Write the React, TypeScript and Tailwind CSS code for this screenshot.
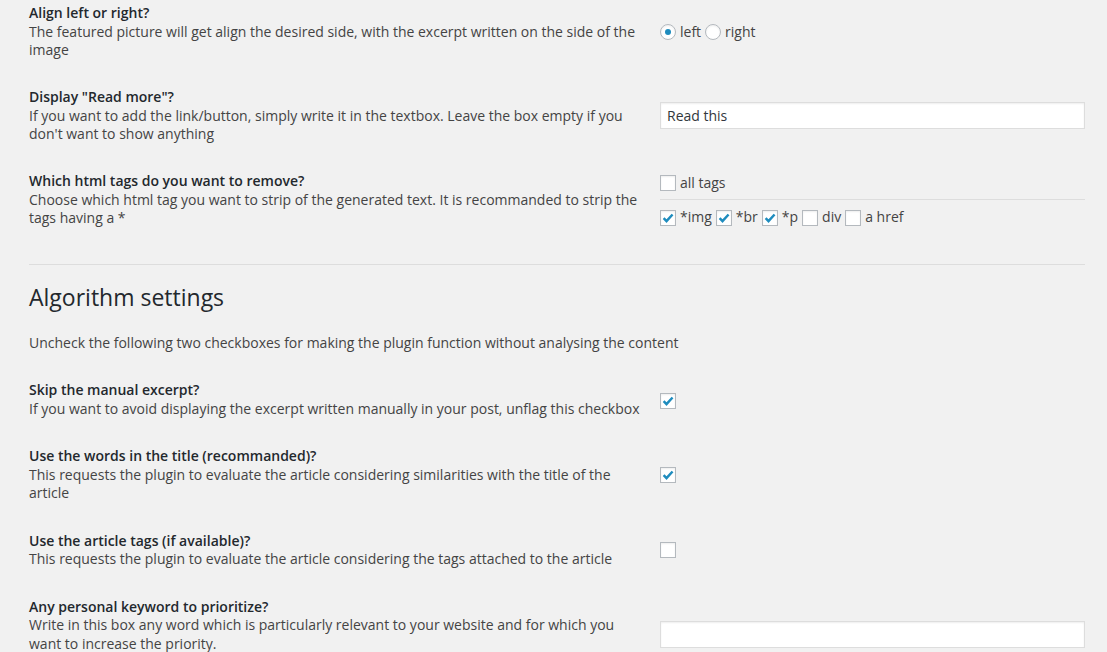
import React from 'react';

const Check = () => (
  <svg viewBox="0 0 16 16" className="w-[16px] h-[16px]">
    <path d="M3 8.2 L6.3 11.6 L13.2 4" fill="none" stroke="#1e8cbe" strokeWidth="2.8" strokeLinejoin="miter" />
  </svg>
);

const Checkbox: React.FC<{ checked?: boolean }> = ({ checked }) => (
  <span className="inline-flex w-[16px] h-[16px] shrink-0 items-center justify-center border border-[#b4b9be] bg-white shadow-[inset_0_1px_2px_rgba(0,0,0,0.07)]">
    {checked && <Check />}
  </span>
);

const Radio: React.FC<{ checked?: boolean }> = ({ checked }) => (
  <span className="inline-flex w-[16px] h-[16px] shrink-0 items-center justify-center rounded-full border border-[#b4b9be] bg-white shadow-[inset_0_1px_2px_rgba(0,0,0,0.07)]">
    {checked && <span className="w-[6px] h-[6px] rounded-full bg-[#1e8cbe]" />}
  </span>
);

const Row: React.FC<{ title: string; desc: string; children?: React.ReactNode; top?: boolean }> = ({ title, desc, children, top }) => (
  <div className={`grid grid-cols-[631px_1fr] ${top ? 'items-start' : 'items-center'}`}>
    <div className="pr-[16px]">
      <div className="font-semibold text-[#23282d]">{title}</div>
      <div>{desc}</div>
    </div>
    <div>{children}</div>
  </div>
);

const Input: React.FC<{ value?: string }> = ({ value }) => (
  <input
    readOnly
    value={value ?? ''}
    className="w-full h-[27px] border border-[#ddd] bg-white px-[6px] text-[14px] text-[#32373c] shadow-[inset_0_1px_2px_rgba(0,0,0,0.07)] outline-none"
  />
);

export default function App() {
  return (
    <div className="min-h-screen bg-[#f1f1f1] font-['Open_Sans',sans-serif] text-[14px] leading-[18.5px] text-[#444]">
      <div className="pl-[29px] pr-[22px] pt-[4px]">
        <div className="flex flex-col gap-[28.5px]">
          <Row
            title="Align left or right?"
            desc="The featured picture will get align the desired side, with the excerpt written on the side of the image"
          >
            <div className="flex items-center">
              <Radio checked />
              <span className="ml-[4px] mr-[4px]">left</span>
              <Radio />
              <span className="ml-[4px]">right</span>
            </div>
          </Row>
          <Row
            title={'Display "Read more"?'}
            desc="If you want to add the link/button, simply write it in the textbox. Leave the box empty if you don't want to show anything"
          >
            <Input value="Read this" />
          </Row>
          <Row
            title="Which html tags do you want to remove?"
            desc="Choose which html tag you want to strip of the generated text. It is recommanded to strip the tags having a *"
          >
            <div className="flex flex-col pt-[1px]">
              <div className="flex items-center">
                <Checkbox />
                <span className="ml-[4px]">all tags</span>
              </div>
              <div className="mt-[7px] mb-[8px] border-t border-[#ddd]" />
              <div className="flex items-center">
                <Checkbox checked />
                <span className="ml-[4px] mr-[4px]">*img</span>
                <Checkbox checked />
                <span className="ml-[4px] mr-[4px]">*br</span>
                <Checkbox checked />
                <span className="ml-[4px] mr-[4px]">*p</span>
                <Checkbox />
                <span className="ml-[4px] mr-[4px]">div</span>
                <Checkbox />
                <span className="ml-[4px]">a href</span>
              </div>
            </div>
          </Row>
        </div>

        <div className="mt-[36px] border-t border-[#ddd]" />

        <h2 className="mt-[18px] text-[23px] leading-[29px] font-normal text-[#23282d]">Algorithm settings</h2>
        <p className="mt-[22px]">Uncheck the following two checkboxes for making the plugin function without analysing the content</p>

        <div className="mt-[29px] flex flex-col gap-[29px]">
          <Row
            title="Skip the manual excerpt?"
            desc="If you want to avoid displaying the excerpt written manually in your post, unflag this checkbox"
          >
            <div className="pt-[7px]">
              <Checkbox checked />
            </div>
          </Row>
          <Row
            title="Use the words in the title (recommanded)?"
            desc="This requests the plugin to evaluate the article considering similarities with the title of the article"
          >
            <div className="pt-[4px]">
              <Checkbox checked />
            </div>
          </Row>
          <Row
            title="Use the article tags (if available)?"
            desc="This requests the plugin to evaluate the article considering the tags attached to the article"
          >
            <div className="pt-[4px]">
              <Checkbox />
            </div>
          </Row>
          <Row
            top
            title="Any personal keyword to prioritize?"
            desc="Write in this box any word which is particularly relevant to your website and for which you want to increase the priority."
          >
            <div className="mt-[23px]">
              <Input />
            </div>
          </Row>
        </div>
      </div>
    </div>
  );
}
